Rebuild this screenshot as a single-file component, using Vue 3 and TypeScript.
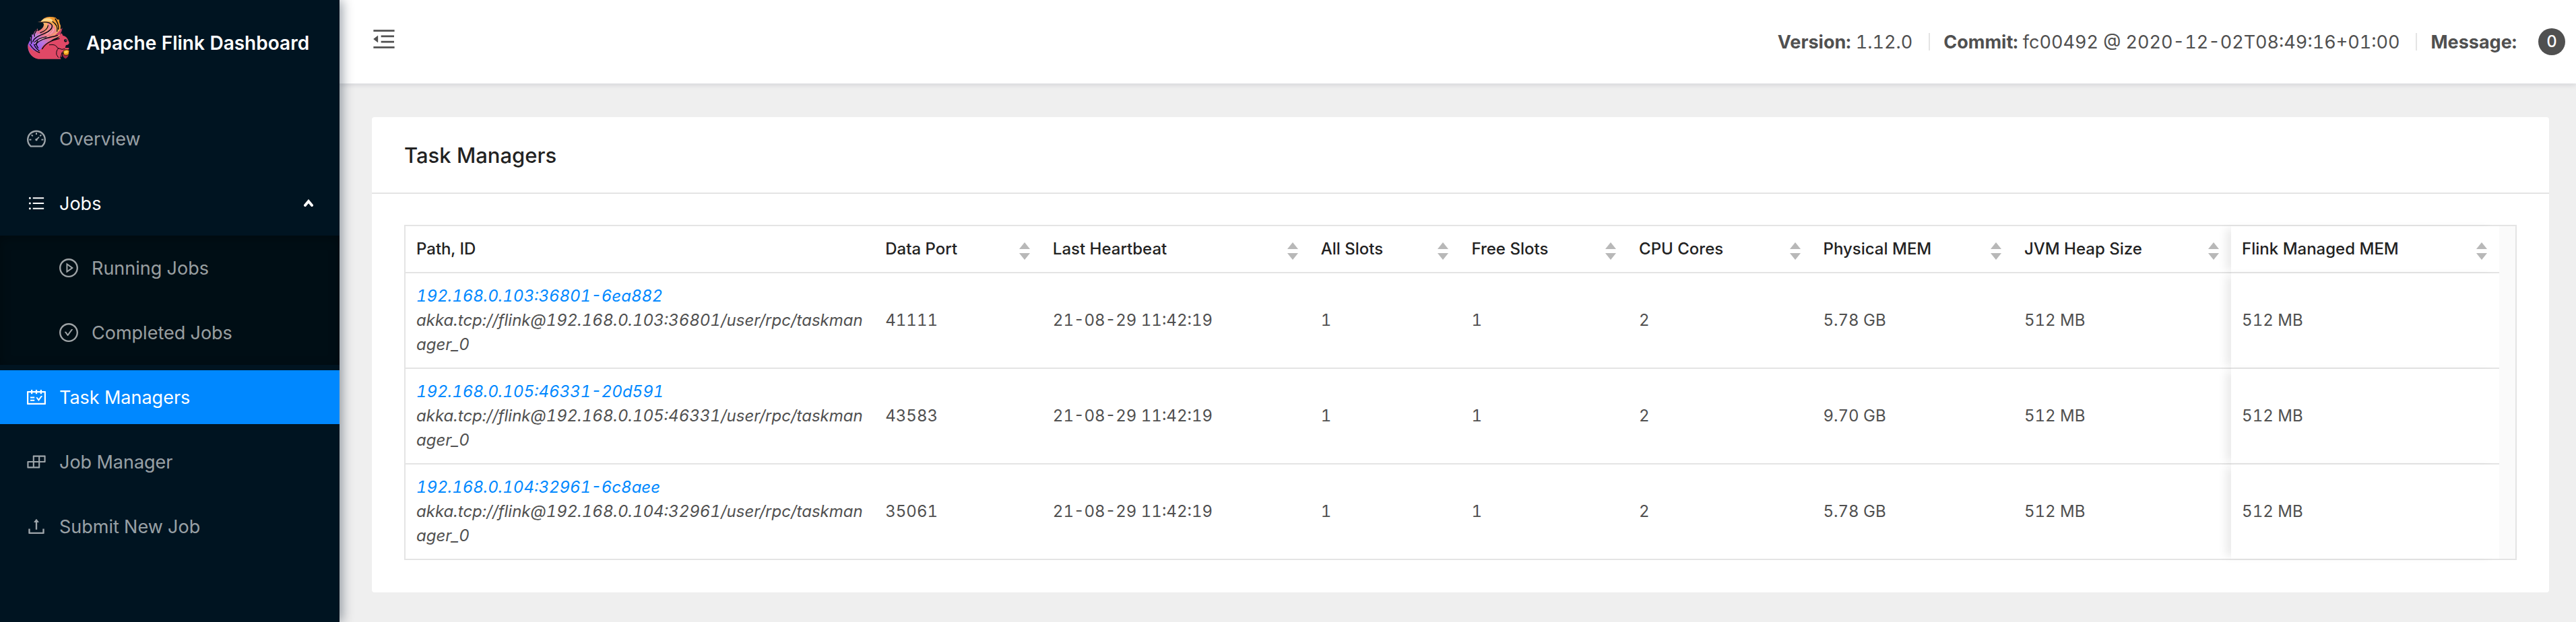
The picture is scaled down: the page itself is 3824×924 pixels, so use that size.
<script setup lang="ts">
interface IconShape {
  viewBox: string
  d: string
}

interface NavItem {
  label: string
  icon: string
  active?: boolean
}

interface Column {
  key: keyof TaskManager
  label: string
  share: number
  sortable: boolean
}

interface TaskManager {
  id: string
  path: string
  port: string
  heartbeat: string
  allSlots: string
  freeSlots: string
  cores: string
  physical: string
  heap: string
  managed: string
}

const RING =
  'M512 64C264.6 64 64 264.6 64 512s200.6 448 448 448 448-200.6 448-448S759.4 64 512 64zm0 820c-205.4 0-372-166.6-372-372s166.6-372 372-372 372 166.6 372 372-166.6 372-372 372z'

const icons: Record<string, IconShape> = {
  dashboard: {
    viewBox: '64 64 896 896',
    d: 'M924.8 385.6a446.7 446.7 0 0 0-96-142.4 446.7 446.7 0 0 0-142.4-96C631.1 123.8 572.5 112 512 112s-119.1 11.8-174.4 35.2a446.7 446.7 0 0 0-142.4 96 446.7 446.7 0 0 0-96 142.4C75.8 440.9 64 499.5 64 560c0 132.7 58.3 257.7 159.9 343.1l1.7 1.4c5.8 4.8 13.1 7.5 20.6 7.5h531.7c7.5 0 14.8-2.7 20.6-7.5l1.7-1.4C901.7 817.7 960 692.7 960 560c0-60.5-11.9-119.1-35.2-174.4zM761.4 836H262.6A371.12 371.12 0 0 1 140 560c0-99.4 38.7-192.8 109-263 70.3-70.3 163.7-109 263-109 99.4 0 192.8 38.7 263 109 70.3 70.3 109 163.7 109 263 0 105.6-44.5 205.5-122.6 276zM623.5 421.5a8.03 8.03 0 0 0-11.3 0L527.7 506c-18.7-5-39.4-.2-54.1 14.5a55.95 55.95 0 0 0 0 79.2 55.95 55.95 0 0 0 79.2 0 55.87 55.87 0 0 0 14.5-54.1l84.5-84.5c3.1-3.1 3.1-8.2 0-11.3l-28.3-28.3zM490 320h44c4.4 0 8-3.6 8-8v-80c0-4.4-3.6-8-8-8h-44c-4.4 0-8 3.6-8 8v80c0 4.4 3.6 8 8 8zm260 218v44c0 4.4 3.6 8 8 8h80c4.4 0 8-3.6 8-8v-44c0-4.4-3.6-8-8-8h-80c-4.4 0-8 3.6-8 8zm12.7-197.2l-31.1-31.1a8.03 8.03 0 0 0-11.3 0l-56.6 56.6a8.03 8.03 0 0 0 0 11.3l31.1 31.1c3.1 3.1 8.2 3.1 11.3 0l56.6-56.6c3.1-3.1 3.1-8.2 0-11.3zm-458.6-31.1a8.03 8.03 0 0 0-11.3 0l-31.1 31.1a8.03 8.03 0 0 0 0 11.3l56.6 56.6c3.1 3.1 8.2 3.1 11.3 0l31.1-31.1c3.1-3.1 3.1-8.2 0-11.3l-56.6-56.6zM262 530h-80c-4.4 0-8 3.6-8 8v44c0 4.4 3.6 8 8 8h80c4.4 0 8-3.6 8-8v-44c0-4.4-3.6-8-8-8z',
  },
  bars: {
    viewBox: '0 0 1024 1024',
    d: 'M912 192H328c-4.4 0-8 3.6-8 8v56c0 4.4 3.6 8 8 8h584c4.4 0 8-3.6 8-8v-56c0-4.4-3.6-8-8-8zm0 284H328c-4.4 0-8 3.6-8 8v56c0 4.4 3.6 8 8 8h584c4.4 0 8-3.6 8-8v-56c0-4.4-3.6-8-8-8zm0 284H328c-4.4 0-8 3.6-8 8v56c0 4.4 3.6 8 8 8h584c4.4 0 8-3.6 8-8v-56c0-4.4-3.6-8-8-8zM104 228a56 56 0 1 0 112 0 56 56 0 1 0-112 0zm0 284a56 56 0 1 0 112 0 56 56 0 1 0-112 0zm0 284a56 56 0 1 0 112 0 56 56 0 1 0-112 0z',
  },
  play: {
    viewBox: '64 64 896 896',
    d: `${RING}M719.4 499.1l-296.1-215A15.9 15.9 0 0 0 398 297v430c0 13.1 14.8 20.5 25.3 12.9l296.1-215a15.9 15.9 0 0 0 0-25.8zm-257.6 134V390.9L628.5 512 461.8 633.1z`,
  },
  check: {
    viewBox: '64 64 896 896',
    d: `${RING}M699 353h-46.9c-10.2 0-19.9 4.9-25.9 13.3L469 584.3l-71.2-98.8c-6-8.3-15.6-13.3-25.9-13.3H325c-6.5 0-10.3 7.4-6.5 12.7l124.6 172.8a31.8 31.8 0 0 0 51.7 0l210.6-292c3.9-5.3.1-12.7-6.4-12.7z`,
  },
  schedule: {
    viewBox: '64 64 896 896',
    d: 'M928 224H768v-56c0-4.4-3.6-8-8-8h-56c-4.4 0-8 3.6-8 8v56H548v-56c0-4.4-3.6-8-8-8h-56c-4.4 0-8 3.6-8 8v56H328v-56c0-4.4-3.6-8-8-8h-56c-4.4 0-8 3.6-8 8v56H96c-17.7 0-32 14.3-32 32v576c0 17.7 14.3 32 32 32h832c17.7 0 32-14.3 32-32V256c0-17.7-14.3-32-32-32zm-40 568H136V296h120v56c0 4.4 3.6 8 8 8h56c4.4 0 8-3.6 8-8v-56h148v56c0 4.4 3.6 8 8 8h56c4.4 0 8-3.6 8-8v-56h148v56c0 4.4 3.6 8 8 8h56c4.4 0 8-3.6 8-8v-56h120v496zM416 496H232c-4.4 0-8 3.6-8 8v48c0 4.4 3.6 8 8 8h184c4.4 0 8-3.6 8-8v-48c0-4.4-3.6-8-8-8zm0 136H232c-4.4 0-8 3.6-8 8v48c0 4.4 3.6 8 8 8h184c4.4 0 8-3.6 8-8v-48c0-4.4-3.6-8-8-8zm308.2-177.4L620.6 598.3l-52.8-73.1c-3-4.2-7.8-6.6-12.9-6.6H500c-6.5 0-10.3 7.4-6.5 12.7l114.1 158.2a15.9 15.9 0 0 0 25.8 0l165-228.7c3.8-5.3 0-12.7-6.5-12.7H737c-5-.1-9.8 2.4-12.8 6.5z',
  },
  build: {
    viewBox: '64 64 896 896',
    d: 'M916 210H376c-17.7 0-32 14.3-32 32v236H108c-17.7 0-32 14.3-32 32v272c0 17.7 14.3 32 32 32h540c17.7 0 32-14.3 32-32V546h236c17.7 0 32-14.3 32-32V242c0-17.7-14.3-32-32-32zm-504 68h200v200H412V278zm-68 468H144V546h200v200zm268 0H412V546h200v200zm268-268H680V278h200v200z',
  },
  upload: {
    viewBox: '64 64 896 896',
    d: 'M400 317.7h73.9V656c0 4.4 3.6 8 8 8h60c4.4 0 8-3.6 8-8V317.7H624c6.7 0 10.4-7.7 6.3-12.9L518.3 163a8 8 0 0 0-12.6 0l-112 141.7c-4.1 5.3-.4 13 6.3 13zM878 626h-60c-4.4 0-8 3.6-8 8v154H214V634c0-4.4-3.6-8-8-8h-60c-4.4 0-8 3.6-8 8v198c0 17.7 14.3 32 32 32h684c17.7 0 32-14.3 32-32V634c0-4.4-3.6-8-8-8z',
  },
}

const jobItems: NavItem[] = [
  { label: 'Running Jobs', icon: 'play' },
  { label: 'Completed Jobs', icon: 'check' },
]

const lowerItems: NavItem[] = [
  { label: 'Task Managers', icon: 'schedule', active: true },
  { label: 'Job Manager', icon: 'build' },
  { label: 'Submit New Job', icon: 'upload' },
]

const columns: Column[] = [
  { key: 'path', label: 'Path, ID', share: 28, sortable: false },
  { key: 'port', label: 'Data Port', share: 10, sortable: true },
  { key: 'heartbeat', label: 'Last Heartbeat', share: 16, sortable: true },
  { key: 'allSlots', label: 'All Slots', share: 9, sortable: true },
  { key: 'freeSlots', label: 'Free Slots', share: 10, sortable: true },
  { key: 'cores', label: 'CPU Cores', share: 11, sortable: true },
  { key: 'physical', label: 'Physical MEM', share: 12, sortable: true },
  { key: 'heap', label: 'JVM Heap Size', share: 13, sortable: true },
  { key: 'managed', label: 'Flink Managed MEM', share: 16, sortable: true },
]
const totalShare = columns.reduce((sum, column) => sum + column.share, 0)
const valueColumns = columns.slice(1)

function manager(address: string, suffix: string, port: string, physical: string): TaskManager {
  return {
    id: `${address}-${suffix}`,
    path: `akka.tcp://flink@${address}/user/rpc/taskmanager_0`,
    port,
    heartbeat: '21-08-29 11:42:19',
    allSlots: '1',
    freeSlots: '1',
    cores: '2',
    physical,
    heap: '512 MB',
    managed: '512 MB',
  }
}

const managers: TaskManager[] = [
  manager('192.168.0.103:36801', '6ea882', '41111', '5.78 GB'),
  manager('192.168.0.105:46331', '20d591', '43583', '9.70 GB'),
  manager('192.168.0.104:32961', '6c8aee', '35061', '5.78 GB'),
]
</script>

<template>
  <div class="layout">
    <aside class="sidebar">
      <a class="brand" href="#">
        <svg class="logo" viewBox="60 42 192 192" aria-hidden="true">
          <defs>
            <linearGradient id="tail" x1="0.75" y1="0" x2="0.2" y2="1">
              <stop offset="0" stop-color="#f59a2c" />
              <stop offset="0.22" stop-color="#f8b568" />
              <stop offset="0.42" stop-color="#ea7280" />
              <stop offset="0.6" stop-color="#b877e0" />
              <stop offset="0.78" stop-color="#9a5cf0" />
              <stop offset="1" stop-color="#e24a72" />
            </linearGradient>
          </defs>
          <path fill="url(#tail)" d="M122 66c10-14 22-20 38-21l16 1 12 3 7 8 8 0 2 14 5 14-1 12 3 10-6 24-30 14-34 22-22 28-6 36c-26 2-46-20-50-48 0-18 6-28 12-34l-2-14 8 2 0-14 6 2 6-14 14-14-1 12c18-8 28-16 28-32-4-10-20-10-34-11z" />
          <path fill="#fbd98a" d="M122 66c10-12 24-16 38-14 12 3 16 9 15 17-10-7-30-8-53-3z" />
          <path fill="#f29a2d" d="M160 48l24 2 10 8 9 2 4 34-6 14c1-24-11-44-41-60z" />
          <path fill="#ee8390" d="M150 72c22 2 34 12 38 30l4 12-30 12-36 8c24-14 34-34 24-62z" />
          <path fill="none" stroke="#f6c3c9" stroke-width="3" stroke-linecap="round" d="M168 84c2 18-6 30-20 38M180 98c-2 12-8 18-16 24M140 140c-22 4-38 12-46 24M156 134l-26 8" />
          <path fill="none" stroke="#c9a2fb" stroke-width="3" stroke-linecap="round" d="M120 122c-14 4-24 12-28 22M100 118l-4 12M100 180c4 6 8 8 12 10" />
          <path fill="#e04866" d="M64 166c10 26 36 44 58 24l8-14c10-14 34-26 60-30l14-12c2-8 6-12 10-16 3 3 5 7 6 11 14 2 22 12 25 24l3 6c0 8-6 12-14 12l-4 12 16 0c4 6-2 10-10 10l-12 2c-8 8-8 18-8 26l-8 6 4 6-102 0c-28-4-46-36-46-67z" />
          <path fill="#c93f66" d="M196 116l22-22-4 16-6 12-14 10-20 6z" />
          <path fill="none" stroke="#07080f" stroke-width="4" stroke-linecap="round" d="M124 70c26-4 44 2 48 14 2 18-20 30-40 38s-40 16-46 34M174 66c18 12 24 26 20 44M186 54c10 14 16 28 14 46M154 84c-2 18-18 26-34 32M104 104c-8 10-12 18-10 28M196 128c-34 10-70 10-98 40M204 142c-36 8-62 20-76 46M80 134c-2 12-2 20 0 30M92 168c4 12 12 20 22 28M74 168c10 18 24 30 42 36M108 152c-8 10-6 22 2 32M146 134c-22 4-40 10-52 24" />
          <path fill="none" stroke="#07080f" stroke-width="3" stroke-linecap="round" d="M160 170c22-4 32 4 36 14l20 6 12-2M200 186c-8 6-10 18-8 28l8 12M216 204c-4 10-2 16-8 22" />
          <circle cx="232" cy="151" r="7" fill="#15131c" />
          <circle cx="234" cy="149" r="2" fill="#b9b9c2" />
          <path fill="#a52848" d="M218 210l28 2c-1 7-5 13-10 17l-3 3c-8-3-14-10-15-22z" />
          <path fill="#f6a11d" stroke="#2a1310" stroke-width="3" d="M221 200c4-10 22-12 28-3l-3 16c-8 6-18 4-23-1z" />
          <path fill="#fcd257" d="M226 201c4-5 12-6 17-3l-4 8-12 1z" />
        </svg>
        <span class="brand-name">Apache Flink Dashboard</span>
      </a>

      <nav aria-label="Main">
        <ul class="menu">
          <li class="menu-entry">
            <a class="menu-link" href="#">
              <svg class="icon" :viewBox="icons.dashboard.viewBox" aria-hidden="true"><path :d="icons.dashboard.d" /></svg>
              <span>Overview</span>
            </a>
          </li>
          <li>
            <button class="menu-link menu-toggle" type="button" aria-expanded="true">
              <svg class="icon" :viewBox="icons.bars.viewBox" aria-hidden="true"><path :d="icons.bars.d" /></svg>
              <span>Jobs</span>
              <svg class="chevron" viewBox="0 0 16 12" aria-hidden="true"><path d="M3 9l5-6 5 6" /></svg>
            </button>
            <ul class="submenu">
              <li v-for="item in jobItems" :key="item.label" class="menu-entry">
                <a class="menu-link nested" href="#">
                  <svg class="icon" :viewBox="icons[item.icon].viewBox" aria-hidden="true"><path :d="icons[item.icon].d" /></svg>
                  <span>{{ item.label }}</span>
                </a>
              </li>
            </ul>
          </li>
          <li v-for="item in lowerItems" :key="item.label" class="menu-entry">
            <a class="menu-link" :class="{ active: item.active }" href="#">
              <svg class="icon" :viewBox="icons[item.icon].viewBox" aria-hidden="true"><path :d="icons[item.icon].d" /></svg>
              <span>{{ item.label }}</span>
            </a>
          </li>
        </ul>
      </nav>
    </aside>

    <div class="page">
      <header class="topbar">
        <button class="fold" type="button" aria-label="Collapse menu">
          <svg class="fold-icon" viewBox="0 0 1024 1024" aria-hidden="true">
            <path d="M408 442h480c4.4 0 8-3.6 8-8v-56c0-4.4-3.6-8-8-8H408c-4.4 0-8 3.6-8 8v56c0 4.4 3.6 8 8 8zm-8 204c0 4.4 3.6 8 8 8h480c4.4 0 8-3.6 8-8v-56c0-4.4-3.6-8-8-8H408c-4.4 0-8 3.6-8 8v56zm504-486H120c-4.4 0-8 3.6-8 8v56c0 4.4 3.6 8 8 8h784c4.4 0 8-3.6 8-8v-56c0-4.4-3.6-8-8-8zm0 632H120c-4.4 0-8 3.6-8 8v56c0 4.4 3.6 8 8 8h784c4.4 0 8-3.6 8-8v-56c0-4.4-3.6-8-8-8zM115.4 518.9L271.7 642c5.8 4.6 14.4.5 14.4-6.9V388.9c0-7.4-8.5-11.5-14.4-6.9L115.4 505.1a8.74 8.74 0 0 0 0 13.8z" />
          </svg>
        </button>
        <div class="build-info">
          <span><strong>Version:</strong> 1.12.0</span>
          <span class="divider"></span>
          <span><strong>Commit:</strong> fc00492 @ 2020-12-02T08:49:16+01:00</span>
          <span class="divider"></span>
          <strong>Message:</strong>
          <span class="badge">0</span>
        </div>
      </header>

      <main class="content">
        <section class="card">
          <h1 class="card-title">Task Managers</h1>
          <div class="card-body">
            <div class="table-frame">
              <table>
                <colgroup>
                  <col v-for="column in columns" :key="column.key" :style="{ width: (column.share / totalShare) * 100 + '%' }" />
                </colgroup>
                <thead>
                  <tr>
                    <th v-for="column in columns" :key="column.key" scope="col">
                      <div class="head-cell">
                        <span>{{ column.label }}</span>
                        <button v-if="column.sortable" class="sorter" type="button" :aria-label="`Sort by ${column.label}`">
                          <svg viewBox="0 0 20 28" aria-hidden="true"><path d="M10 1l8 10H2zM10 27l8-10H2z" /></svg>
                        </button>
                      </div>
                    </th>
                  </tr>
                </thead>
                <tbody>
                  <tr v-for="row in managers" :key="row.id">
                    <td class="path-cell">
                      <a href="#">{{ row.id }}</a>
                      <div>{{ row.path }}</div>
                    </td>
                    <td v-for="column in valueColumns" :key="column.key">{{ row[column.key] }}</td>
                  </tr>
                </tbody>
              </table>
            </div>
          </div>
        </section>
      </main>
    </div>
  </div>
</template>

<style>
body {
  margin: 0;
}
</style>

<style scoped>
.layout {
  display: flex;
  min-height: 100vh;
  background: #efefef;
  color: #505050;
  font-family: Inter, "Liberation Sans", sans-serif;
  font-size: 27px;
  font-variant-numeric: tabular-nums;
}

button {
  padding: 0;
  border: 0;
  background: none;
  color: inherit;
  font: inherit;
  text-align: left;
  cursor: pointer;
}

a {
  color: #0088ff;
  text-decoration: none;
}

ul {
  margin: 0;
  padding: 0;
  list-style: none;
}

.sidebar {
  z-index: 2;
  flex: 0 0 504px;
  background: #001421;
  box-shadow: 4px 0 16px rgba(0, 20, 41, 0.4);
}

.brand {
  display: flex;
  align-items: center;
  gap: 24px;
  box-sizing: border-box;
  height: 124px;
  padding: 0 40px;
  color: #ffffff;
}

.logo {
  flex: none;
  width: 64px;
  height: 64px;
  margin-bottom: 12px;
}

.brand-name {
  padding-top: 4px;
  font-size: 28px;
  font-weight: 600;
  white-space: nowrap;
}

.menu {
  padding-top: 34px;
}

.menu-entry {
  padding: 8px 0;
}

.menu-link {
  display: flex;
  align-items: center;
  gap: 20px;
  box-sizing: border-box;
  width: 100%;
  height: 80px;
  padding: 0 38px 0 40px;
  color: rgba(255, 255, 255, 0.62);
}

.menu-toggle {
  margin: 8px 0;
  color: #ffffff;
}

.nested {
  padding-left: 88px;
}

.active {
  background: #0088ff;
  color: #ffffff;
}

.icon {
  flex: none;
  width: 28px;
  height: 28px;
  fill: currentColor;
}

.chevron {
  width: 16px;
  height: 12px;
  margin-left: auto;
  fill: none;
  stroke: #ffffff;
  stroke-width: 4;
  stroke-linecap: round;
}

.submenu {
  background: #000e15;
  box-shadow: inset 0 4px 16px rgba(0, 0, 0, 0.3);
}

.page {
  display: flex;
  flex: 1;
  flex-direction: column;
  min-width: 0;
}

.topbar {
  z-index: 1;
  display: flex;
  align-items: center;
  justify-content: space-between;
  height: 124px;
  padding: 0 16px 0 46px;
  background: #ffffff;
  box-shadow: 0 2px 8px rgba(0, 20, 41, 0.12);
}

.fold {
  display: flex;
  padding-bottom: 8px;
}

.fold-icon {
  width: 40px;
  height: 40px;
  fill: #505050;
}

.build-info {
  display: flex;
  align-items: center;
  white-space: nowrap;
}

strong {
  font-weight: 700;
}

.divider {
  width: 2px;
  height: 26px;
  margin: 0 20px 0 24px;
  background: #e4e4e4;
}

.badge {
  width: 40px;
  height: 40px;
  margin-left: 32px;
  border-radius: 20px;
  background: #505050;
  color: #ffffff;
  font-size: 24px;
  font-weight: 500;
  line-height: 40px;
  text-align: center;
}

.content {
  padding: 50px 40px 44px 48px;
}

.card {
  border-radius: 4px;
  background: #ffffff;
}

.card-title {
  margin: 0;
  padding: 33px 48px 31px;
  border-bottom: 2px solid #e4e4e4;
  color: #222222;
  font-size: 31px;
  font-weight: 500;
  line-height: 48px;
}

.card-body {
  padding: 46px 48px 48px;
}

.table-frame {
  padding-right: 24px;
  border: 2px solid #e4e4e4;
  background: #fafafa;
}

table {
  width: 100%;
  border-collapse: separate;
  border-spacing: 0;
  background: #ffffff;
  font-size: 24px;
  line-height: 36px;
  table-layout: fixed;
}

th,
td {
  padding: 16px;
  border-bottom: 2px solid #e4e4e4;
  text-align: left;
}

th {
  color: #222222;
  font-weight: 500;
}

tbody tr:last-child td {
  border-bottom: 0;
}

th:last-child,
td:last-child {
  position: relative;
  z-index: 1;
  background: #ffffff;
  box-shadow: -12px 0 12px -4px rgba(0, 0, 0, 0.08);
}

.head-cell {
  display: flex;
  align-items: center;
  justify-content: space-between;
  white-space: nowrap;
}

.sorter {
  display: flex;
  padding-top: 6px;
}

.sorter svg {
  width: 20px;
  height: 28px;
  fill: #b8b8b8;
}

.path-cell {
  font-style: italic;
  word-break: break-all;
}
</style>
